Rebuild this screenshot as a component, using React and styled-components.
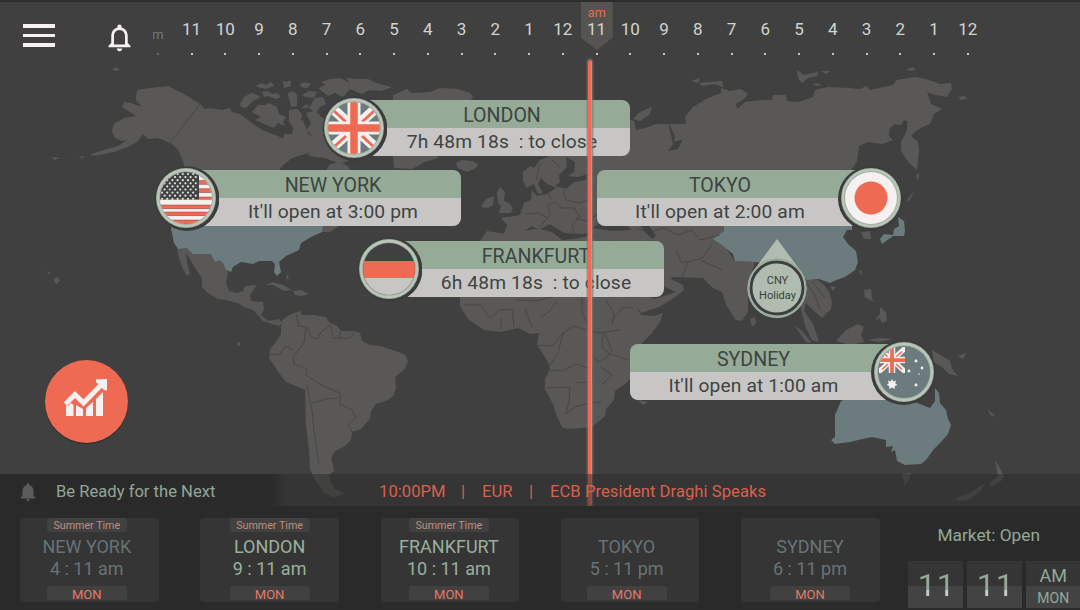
import React from "react";
import styled, { createGlobalStyle } from "styled-components";

const c = {
  bg: "#404040",
  dark: "#2a2a2a",
  land: "#595856",
  blue: "#6b7b7e",
  green: "#95ab97",
  grey: "#c8c6c5",
  orange: "#ee6a52",
  white: "#f6f0f0",
  ink: "#3d4442",
};

const GlobalStyle = createGlobalStyle`
  * { box-sizing: border-box; }
  body { margin: 0; background: ${c.bg}; font-family: Roboto, "Liberation Sans", sans-serif; }
`;

const Screen = styled.div`
  position: relative;
  display: flex;
  flex-direction: column;
  width: 1080px;
  height: 610px;
  overflow: hidden;
  background: ${c.bg};
  border-top: 2px solid #2e2e2e;
`;

const MapLayer = styled.svg`
  position: absolute;
  left: 0;
  top: -2px;
`;

const Header = styled.header`
  position: relative;
  display: flex;
  height: 64px;
  padding-left: 23px;
`;

const MenuButton = styled.div`
  display: flex;
  flex-direction: column;
  gap: 6px;
  width: 32px;
  margin-top: 22px;
`;

const MenuBar = styled.span`
  height: 3.6px;
  background: ${c.white};
`;

const HeaderBell = styled.svg`
  flex: none;
  width: 33px;
  height: 33px;
  margin: 18.5px 0 0 47.5px;
`;

const HourScale = styled.div`
  display: flex;
  margin-left: 5.5px;
`;

const Hour = styled.div`
  position: relative;
  display: flex;
  flex-direction: column;
  align-items: center;
  width: 33.76px;
  padding-top: ${(p) => (p.$small ? 23 : 17)}px;
  color: ${(p) => (p.$small ? "#6b7b7e" : "#d2d4d0")};
  font-size: ${(p) => (p.$small ? 13 : 17)}px;
  line-height: 20px;

  &::after {
    content: "";
    width: 2px;
    height: 2px;
    margin-top: ${(p) => (p.$small ? 8 : 14)}px;
    background: ${(p) => (p.$small ? "#6c6c6c" : "#c4c8c3")};
  }
`;

const HourText = styled.span`
  position: relative;
`;

const NowTag = styled.div`
  position: absolute;
  top: -2px;
  left: 1px;
  width: 32px;
  height: 50px;
  padding-top: 3px;
  background: #555451;
  clip-path: polygon(0 0, 100% 0, 100% 75%, 50% 100%, 0 75%);
  color: ${c.orange};
  font-size: 12.5px;
  line-height: 20px;
  text-align: center;
`;

const Stage = styled.main`
  position: relative;
  height: 408px;
`;

const Market = styled.div`
  position: absolute;
  left: ${(p) => p.$x}px;
  top: ${(p) => p.$y - 66 - 33}px;
  display: flex;
  align-items: center;
  flex-direction: ${(p) => (p.$flip ? "row-reverse" : "row")};
  width: ${(p) => p.$w || 308}px;
  height: 66px;
`;

const MarketFlag = styled.svg`
  position: relative;
  flex: none;
  width: 66px;
  height: 66px;
`;

const MarketBody = styled.div`
  flex: 1;
  height: 56px;
  margin: ${(p) => (p.$flip ? "0 -33px 0 0" : "0 0 0 -33px")};
  padding: ${(p) => (p.$flip ? "0 27px 0 0" : "0 0 0 20px")};
  border-radius: ${(p) => (p.$flip ? "8px 0 0 8px" : "0 8px 8px 0")};
  background: linear-gradient(${c.green} 28px, ${c.grey} 28px);
  color: ${c.ink};
  text-align: center;
`;

const MarketName = styled.div`
  height: 28px;
  font-size: 19.6px;
  line-height: 32px;
`;

const MarketStatus = styled.div`
  height: 28px;
  font-size: 19.2px;
  line-height: 27px;
  letter-spacing: 0.15px;
  white-space: pre;
`;

const TimeLine = styled.div`
  position: absolute;
  left: 588px;
  top: -6px;
  width: 4px;
  height: 446px;
  border-radius: 2px;
  background: linear-gradient(90deg, ${c.orange} 70%, #cf9084 70%);
  box-shadow: 0 0 0 1.5px rgba(112, 120, 124, 0.6);
`;

const HolidayPin = styled.div`
  position: absolute;
  left: 747px;
  top: 173px;
  width: 60px;
  height: 80px;
  padding: 34px 0 0 1px;
  color: #353f3c;
  font-size: 11px;
  line-height: 15px;
  text-align: center;
`;

const PinShape = styled.svg`
  position: absolute;
  left: 0;
  top: 0;
`;

const PinLabel = styled.div`
  position: relative;
`;

const ChartButton = styled.div`
  position: absolute;
  left: 45px;
  top: 294px;
  display: flex;
  width: 83px;
  height: 83px;
  border-radius: 50%;
  background: ${c.orange};
  box-shadow: 0 1px 1px #2a2a2a;
`;

const Ticker = styled.div`
  position: relative;
  display: flex;
  align-items: center;
  height: 31.5px;
  padding: 4px 0 0 17px;
  background: linear-gradient(90deg, ${c.dark} 270px, rgba(42, 42, 42, 0.5) 286px);
  color: #93a698;
  font-size: 16.6px;
`;

const TickerLabel = styled.div`
  width: 340px;
  padding-left: 17px;
`;

const TickerPart = styled.div`
  width: ${(p) => p.$w}px;
  color: #d9614c;
  letter-spacing: 0.05px;
  white-space: nowrap;
`;

const Footer = styled.footer`
  position: relative;
  display: flex;
  height: 104.5px;
  padding: 12px 0 0 20px;
  background: ${c.dark};
`;

const Clocks = styled.div`
  display: flex;
  gap: 41.7px;
`;

const Clock = styled.div`
  display: flex;
  flex-direction: column;
  align-items: center;
  width: 138.6px;
  height: 84px;
  padding-right: ${(p) => p.$shift}px;
  border-radius: 4px;
  background: #353535;
  color: ${(p) => (p.$open ? "#9ab09e" : "#687376")};
  font-size: 18px;
  line-height: 22px;
`;

const ClockTag = styled.div`
  width: 80px;
  height: 14px;
  border-radius: 3px;
  background: ${(p) => (p.$empty ? "transparent" : "#414141")};
  color: ${(p) => (p.$day ? "#e27a66" : "#c08e80")};
  font-size: ${(p) => (p.$day ? 13 : 10.7)}px;
  line-height: ${(p) => (p.$day ? 17 : 15)}px;
  text-align: center;
`;

const ClockCity = styled.div`
  margin-top: 4px;
`;

const ClockTime = styled.div`
  margin-bottom: 6px;
`;

const Local = styled.div`
  display: flex;
  flex-direction: column;
  margin-left: 28px;
  padding-top: 6px;
  color: #93a898;
`;

const LocalStatus = styled.div`
  width: 162px;
  height: 37px;
  font-size: 17.3px;
  line-height: 23px;
  text-align: center;
`;

const Tiles = styled.div`
  display: flex;
  gap: 4px;
  width: 172px;
`;

const Tile = styled.div`
  flex: none;
  width: 55px;
  height: 47px;
  padding-left: ${(p) => (p.$stack ? 0 : 3)}px;
  background: linear-gradient(#353535 25px, #434343 25px);
  font-size: ${(p) => (p.$stack ? 18 : 32)}px;
  line-height: ${(p) => (p.$stack ? 29 : 48)}px;
  letter-spacing: ${(p) => (p.$stack ? 0 : 1)}px;
  text-align: center;
`;

const TileDigits = styled.span`
  background: linear-gradient(#93a898 62%, #c8ccc8 62%);
  background-clip: text;
  -webkit-background-clip: text;
  color: transparent;
`;

const TileDay = styled.div`
  font-size: 14px;
  line-height: 16px;
`;

const lands = [
  // North America
  "M136 97L137 90 150 88 168 86 184 94 200 104 205 109 210 108 222 110 230 108 232 112 240 114 252 123 262 130 270 133 278 136 283 139 284 134 292 134 295 121 303 120 308 134 314 137 322 142 317 150 305 154 292 158 280 168 280 180 286 190 300 200 312 198 318 180 326 170 330 164 340 162 348 166 360 195 365 210 345 222 330 232 171 232 176 200 184 165 178 150 170 143 163 140 157 138 148 139 143 134 138 141 130 146 117 151 105 154 92 156 91 154 104 150 118 146 127 140 122 141 115 138 112 131 114 124 124 118 136 116 130 112 122 107 124 102 131 103 142 107 136 100Z",
  "M112 69L116 67 120 70 115 71Z M78 157L84 156 83 158Z M52 157L60 158 54 160Z",
  // Canadian Arctic
  "M240 104L244 97 251 93 257 95 261 97 253 101 246 108 241 107Z",
  "M252 112L258 105 265 105 269 103 277 107 279 114 286 117 283 122 285 126 278 123 274 128 262 123 255 120 261 117Z",
  "M256 86L261 83 266 85 271 82 274 86 266 89 258 87Z M262 92L267 91 272 94 277 93 281 97 276 99 268 96 264 97Z M283 81L287 82 290 80 291 86 284 88Z M288 93L293 91 298 96 294 100 288 97Z",
  "M301 108L307 104 309 108 315 98 323 97 326 104 320 107 316 113 309 108Z M302 95L309 91 317 92 314 98 306 97Z M300 84L305 82 311 84 307 88 301 87Z M289 98L297 97 297 106 291 107Z",
  "M318 88L326 85 321 82 330 79 341 78 350 83 346 78 357 79 368 79 376 83 392 87 381 91 369 90 362 94 350 89 343 97 335 93 328 96 323 92Z",
  "M393 95L407 89 411 93 430 92 440 88 458 89 470 93 473 97 455 120 437 155 438 158 425 162 412 169 394 168 392 145Z",
  "M306 113L313 111 318 113 322 118 330 120 340 150 350 160 340 164 325 158 314 157 308 155 311 149 319 147 315 138 306 130 311 124Z M289 110L297 109 302 114 301 121 294 128 289 122Z",
  // Mexico and Central America
  "M177 249L187 247 212 253 222 261 228 272 226 283 229 291 237 293 243 291 245 286 257 285 250 295 251 301 263 302 264 309 261 315 268 321 279 319 282 323 279 326 272 324 263 321 253 310 244 307 238 303 226 300 218 299 208 293 202 287 202 278 195 268 188 256 186 252 187 263 190 274 187 276 183 269 179 258Z",
  "M265 285L273 282 283 285 292 290 284 291 273 285Z M293 291L301 290 309 294 303 296 295 295Z M286 272L289 278 287 280Z",
  "M53 279L58 277 60 281 56 284Z M47 271L51 273 48 274Z M236 344L240 342 240 346Z",
  // South America
  "M281 326L282 320 288 316 294 313 300 311 302 315 313 315 326 317 329 322 337 326 341 331 354 331 360 333 362 341 370 345 380 346 396 351 405 355 408 361 405 369 395 377 396 388 394 395 388 400 376 404 371 411 370 419 361 429 352 432 351 440 345 446 335 451 331 458 333 465 334 471 329 475 331 483 335 489 345 494 333 497 323 492 314 478 310 469 309 450 306 425 305 390 296 386 286 382 279 373 269 358 270 349 276 342 281 334Z",
  // Europe
  "M523 180L523 172 530 166 534 168 540 160 552 155 570 150 590 130 608 120 622 118 634 121 636 130 645 128 656 124 668 125 671 131 680 141 688 170 700 190 700 240 674 277 664 280 640 270 600 240 588 233 575 235 560 232 545 238 540 230 532 226 520 234 504 234 507 225 501 218 520 215 524 203 531 200 532 190 537 196 549 193 556 188 548 184 545 192 538 194 534 184 526 188Z",
  "M481 207L486 199 494 196 493 205 488 208Z M497 192L500 187 505 192 504 201 509 203 513 208 511 213 499 213 501 206 498 203Z",
  "M456 163L462 160 472 161 478 164 476 168 467 172 458 168Z",
  "M633 119L640 112 652 107 650 114 640 121Z M691 81L700 78 698 83Z M699 83L710 82 722 81 723 87 714 84 702 86Z",
  // Asia
  "M640 160L660 124 686 124 685 117 693 107 708 98 721 93 721 88 730 91 741 89 748 94 744 99 736 104 737 109 745 102 760 100 772 100 773 95 786 95 787 101 799 102 813 97 815 90 828 87 848 88 860 89 866 86 870 90 893 85 897 80 915 77 926 79 940 84 951 83 952 89 947 97 935 95 927 92 931 104 942 109 934 114 930 124 923 127 916 131 911 136 918 142 919 151 917 170 909 163 901 151 901 142 907 130 907 121 897 128 890 127 889 136 893 140 882 144 868 142 859 146 857 161 850 172 842 190 840 226 720 240 735 261 755 262 751 276 748 300 748 312 742 321 736 320 726 305 722 292 713 288 703 278 674 277 655 250Z",
  "M797 70L804 75 818 72 817 76 808 78 802 83 798 78Z M821 71L831 71 826 74Z M812 85L817 83 822 86Z M907 69L913 67 916 70 909 71Z M958 97L965 96 967 99 961 100Z",
  // Arabia
  "M626 288L634 275 650 272 666 268 671 279 683 285 684 290 674 298 659 307 641 313 633 302Z",
  // Africa
  "M487 231L505 234 535 229 553 230 562 240 590 236 618 242 628 260 632 298 641 315 654 316 663 313 660 322 652 333 640 345 632 352 630 365 632 377 625 384 615 391 614 400 606 409 605 416 592 427 570 429 563 428 557 417 553 404 545 389 545 379 550 369 548 362 539 348 537 344 539 333 530 334 518 328 501 332 484 330 468 319 460 306 460 290 466 265 474 250Z",
  "M638 400L648 402 643 405Z M750 319L755 317 756 323 752 327Z",
  // South-East Asia
  "M798 276L806 279 818 280 824 285 829 292 832 302 831 309 822 318 813 310 806 303 804 311 813 324 819 342 812 340 806 328 801 310Z M794 325L802 331 812 343 806 342Z M836 341L846 330 858 324 864 327 861 335 864 342 850 345Z",
  "M864 290L871 289 872 299 876 302 870 300 865 297Z M880 307L886 312 887 321 882 323 880 318 875 320 880 314Z M868 340L880 338 893 339 880 342Z M830 286L836 287 833 291Z M859 270L862 271 861 276Z",
  "M861 232L870 231 871 239 864 239Z M916 176L919 172 918 181Z M906 201L914 191 910 200Z M903 489L911 473 905 480Z",
  "M932 350L942 356 950 361 952 369 958 376 949 374 943 368 934 362Z M958 356L966 353 963 359Z M998 476L995 460 1001 470 1004 477 1000 482 991 487 989 484Z M985 483L980 492 968 500 957 501 956 498 968 494Z M902 474L911 473 908 482 903 480Z M988 409L996 417 990 415Z",
];

const highlighted = [
  "M171 228L174 243 178 249 187 248 193 254 211 254 215 262 219 260 223 263 226 270 231 272 233 267 241 262 253 264 259 261 272 261 275 264 274 272 277 276 281 272 279 262 286 256 299 250 301 243 311 237 322 232 323 225 171 225Z",
  "M713 239L724 231 724 224 852 224 852 230 847 230 843 237 848 244 856 251 858 262 855 270 845 277 834 281 830 283 819 279 807 280 800 275 780 265 755 262 735 261 733 254 723 246Z",
  "M880 239L884 234 893 235 894 229 899 226 898 217 904 221 905 231 904 236 893 236 886 241 882 244Z",
  "M841 401L870 388 890 380 915 402 930 408 935 401 935 388 939 393 940 403 946 410 948 419 951 425 948 434 941 442 934 449 926 460 921 464 905 465 897 461 895 450 891 452 893 446 886 447 886 440 872 437 858 440 850 442 835 444 831 440 835 437 835 415Z",
];

const borders = [
  "M200 104L170 143 178 150 184 164",
  "M296 314L299 326 306 327 304 343 293 357 294 364 307 369 306 375 321 385 340 393 340 404 352 410 356 418 348 424 352 432",
  "M307 327L311 337 317 339 322 331 331 325 333 338 349 338M341 331L339 338M354 332L351 338",
  "M270 354L279 355 286 346 293 350M307 385L310 402 312 410 314 430 319 465M313 403L326 399 338 398",
  "M465 305L480 305 490 318 500 310 512 309 514 327M501 318V330M515 300L535 301 552 297M525 309L532 327M540 318L550 311 556 302M536 345L553 346 562 334 574 326 590 331 600 333 619 330",
  "M563 333L558 353 549 366M582 298V312L590 330M603 333L602 347 610 354 599 362 590 354 591 342M548 370L563 371 576 364 593 370 592 382 576 383M546 388L570 387 569 401 566 414 575 407 586 404 601 402M610 354L629 360M601 367L612 375 602 384M612 321L622 308 633 307M605 333L612 352",
  "M540 227L550 215 548 205 555 202 562 208 574 208 580 217 572 225 574 234M525 214L539 213 548 218M545 190L552 200M563 190L566 200 580 203 590 198M576 218L586 221 598 214 598 204 612 200M596 224L612 228",
  "M636 228L650 232 664 228 678 235 692 230 700 240 720 235M682 278L688 262 702 258 712 244M700 260L722 270M762 268L775 275",
  "M676 250L681 262 688 262M540 163L536 180M552 160L560 167M606 300L614 313 612 325M650 240L644 250 650 260",
  "M805 282L815 295 820 310M812 281L825 298",
];

const WorldMap = () => (
  <MapLayer width="1080" height="508" viewBox="0 0 1080 508">
    {lands.map((d) => <path key={d} d={d} fill={c.land} />)}
    <path
      fill={c.bg}
      d="M668 122L675 136 674 142 683 139 678 149 668 151 673 144ZM555 186L560 182 559 175 567 167 566 157 575 162 574 172 568 176 578 177 588 174 586 180 574 182 566 189ZM538 184L541 178 551 188 544 195ZM625 260L630 275 640 293 655 299 676 292 662 286 650 279 644 270 636 262ZM592 228L607 220 625 224 632 230 612 231ZM638 222L648 224 656 236 652 239 645 232ZM174 229L190 227 202 229 189 233ZM284 227L302 226 291 230ZM889 131L894 124 901 125 904 120 908 122 903 134 893 140ZM540 229L552 232 562 240 580 238 580 234 564 233 556 228 550 224Z"
    />
    {highlighted.map((d) => <path key={d} d={d} fill={c.blue} />)}
    {borders.map((d) => <path key={d} d={d} fill="none" stroke="#434342" strokeWidth="0.8" strokeLinejoin="round" />)}
  </MapLayer>
);

const Union = () => (
  <>
    <rect x="-30" y="-30" width="60" height="60" fill={c.blue} />
    <path d="M-30-27L30 27M-30 27L30-27" stroke={c.white} strokeWidth="10" />
    <path d="M-20-17L-8-6M20 19L8 8M-20 19L-8 8M20-17L8-6" stroke={c.orange} strokeWidth="2.8" />
    <path d="M0-30V30M-30 0H30" stroke={c.white} strokeWidth="13" />
    <path d="M0-30V30M-30 0H30" stroke={c.orange} strokeWidth="7.5" />
  </>
);

const stars = [];
for (let row = 0; row < 9; row += 1) {
  for (let col = 0; col < 8; col += 1) {
    stars.push([-24 + col * 5.2 + (row % 2 ? 2.6 : 0), -24 + row * 3.1]);
  }
}

const flagArt = {
  uk: <Union />,
  us: (
    <>
      <rect x="-30" y="-30" width="60" height="60" fill={c.white} />
      {[-17.5, -9.2, -1, 7, 14, 22].map((y) => (
        <rect key={y} x="-30" y={y} width="60" height="3.8" fill={c.orange} stroke="#765048" strokeWidth="0.5" />
      ))}
      <rect x="-30" y="-30" width="43" height="31.5" fill="#404243" />
      {stars.filter((s) => s[0] < 12).map((s) => <circle key={s.join()} cx={s[0]} cy={s[1]} r="1.1" fill="#dfe3df" />)}
      <rect x="-30" y="1.8" width="60" height="4" fill={c.white} />
    </>
  ),
  de: (
    <>
      <rect x="-30" y="-30" width="60" height="60" fill={c.bg} />
      <rect x="-30" y="-8" width="60" height="17" fill={c.orange} />
      <rect x="-30" y="9" width="60" height="24" fill={c.grey} />
    </>
  ),
  jp: (
    <>
      <rect x="-30" y="-30" width="60" height="60" fill={c.white} />
      <circle r="16.5" fill={c.orange} />
    </>
  ),
  au: (
    <>
      <rect x="-30" y="-30" width="60" height="60" fill={c.blue} />
      <svg x="-25" y="-25" width="26" height="26" viewBox="-26 -26 52 52"><Union /></svg>
      <path d="M-12 7L-10.700 9.500-8 8.600-8.800 11.200-6.500 13-9.200 14-9.300 17-12 15.400-14.700 17-14.800 14-17.300 13-15.200 11.200-16 8.600-13.300 9.500Z" fill={c.white} />
      {[[12, -11], [18, -4], [5, -1], [12, 13]].map((s) => <circle key={s.join()} cx={s[0]} cy={s[1]} r="1.4" fill={c.white} />)}
      <circle cx="15" cy="2" r="0.8" fill={c.white} />
    </>
  ),
};

const Flag = ({ code, flip }) => (
  <MarketFlag viewBox="-33 -33 66 66">
    <defs>
      <clipPath id={`flag-${code}`}><circle r="26" /></clipPath>
    </defs>
    <circle cx={flip ? -0.6 : 1} cy="0.6" r="32.400" fill="#3c3c3c" />
    <circle r="30" fill={c.green} />
    <circle r="28" fill="none" stroke="#bcc4bb" strokeWidth="2.4" />
    <g clipPath={`url(#flag-${code})`}>{flagArt[code]}</g>
  </MarketFlag>
);

const markets = [
  { code: "uk", x: 321, y: 127.5, w: 309, name: "LONDON", status: "7h 48m 18s  : to close" },
  { code: "us", x: 152.5, y: 198, name: "NEW YORK", status: "It'll open at 3:00 pm" },
  { code: "de", x: 355.5, y: 268.5, name: "FRANKFURT", status: "6h 48m 18s  : to close" },
  { code: "jp", x: 596.5, y: 198, w: 307, name: "TOKYO", status: "It'll open at 2:00 am", flip: true },
  { code: "au", x: 630, y: 372.4, w: 307, name: "SYDNEY", status: "It'll open at 1:00 am", flip: true },
];

const hours = ["11", "10", "9", "8", "7", "6", "5", "4", "3", "2", "1", "12"];

const clocks = [
  { city: "NEW YORK", time: "4 : 11 am", summer: true, shift: 5 },
  { city: "LONDON", time: "9 : 11 am", summer: true, open: true, shift: 0 },
  { city: "FRANKFURT", time: "10 : 11 am", summer: true, open: true, shift: 2 },
  { city: "TOKYO", time: "5 : 11 pm", shift: 7 },
  { city: "SYDNEY", time: "6 : 11 pm", shift: 1 },
];

export default function App() {
  return (
    <>
      <GlobalStyle />
      <Screen>
        <WorldMap />
        <Header>
          <MenuButton>
            <MenuBar />
            <MenuBar />
            <MenuBar />
          </MenuButton>
          <HeaderBell viewBox="0 0 24 24" fill={c.white}>
            <path d="M12 22c1.1 0 2-.9 2-2h-4c0 1.100.9 2 2 2zm6-6v-5c0-3.070-1.630-5.640-4.500-6.320V4c0-.83-.67-1.500-1.500-1.500s-1.500.67-1.500 1.500v.68C7.640 5.360 6 7.920 6 11v5l-2 2v1h16v-1l-2-2zm-2 1H8v-6c0-2.480 1.510-4.500 4-4.500s4 2.020 4 4.500v6z" />
          </HeaderBell>
          <HourScale>
            <Hour $small>m</Hour>
            {[...hours, ...hours].map((h, i) => (
              <Hour key={i}>
                {i === 12 && <NowTag>am</NowTag>}
                <HourText>{h}</HourText>
              </Hour>
            ))}
          </HourScale>
        </Header>
        <Stage>
          {markets.map((m) => (
            <Market key={m.code} $x={m.x} $y={m.y} $w={m.w} $flip={m.flip}>
              <Flag code={m.code} flip={m.flip} />
              <MarketBody $flip={m.flip}>
                <MarketName>{m.name}</MarketName>
                <MarketStatus>{m.status}</MarketStatus>
              </MarketBody>
            </Market>
          ))}
          <HolidayPin>
            <PinShape width="60" height="80" viewBox="0 0 60 80">
              <path d="M30 0L53 31A29.500 29.500 0 1 1 7 31Z" fill="#b1bcb1" />
              <circle cx="30" cy="49" r="28.800" fill="none" stroke={c.green} strokeWidth="1.400" />
              <circle cx="30" cy="49" r="26" fill="none" stroke="#3d403e" strokeWidth="3" />
            </PinShape>
            <PinLabel>CNY</PinLabel>
            <PinLabel>Holiday</PinLabel>
          </HolidayPin>
          <ChartButton>
            <svg width="83" height="83" viewBox="0 9 83 83" fill={c.white}>
              <path d="M21 60V55L25 51 28.500 54V65H21ZM31 54L38 58V65H31ZM41 57L48 51V65H41ZM51 48L58 41V65H51Z" />
              <path d="M20.500 52L30 42 39 51 56 33" fill="none" stroke={c.orange} strokeWidth="8" />
              <path d="M20.500 53L30 43.500 38.500 52 57 33" fill="none" stroke={c.white} strokeWidth="5" />
              <path d="M51 28.500L62 28V39.500L59 39 51 31Z" />
            </svg>
          </ChartButton>
          <TimeLine />
        </Stage>
        <Ticker>
          <svg width="22" height="22" viewBox="0 0 24 24" fill="#5c5c5b">
            <path d="M12 22c1.100 0 2-.9 2-2h-4c0 1.100.89 2 2 2zm6-6v-5c0-3.070-1.640-5.640-4.500-6.320V4c0-.83-.67-1.500-1.500-1.500s-1.500.67-1.500 1.500v.68C7.630 5.360 6 7.920 6 11v5l-2 2v1h16v-1l-2-2z" />
          </svg>
          <TickerLabel>Be Ready for the Next</TickerLabel>
          <TickerPart $w={82}>10:00PM</TickerPart>
          <TickerPart $w={21}>|</TickerPart>
          <TickerPart $w={47}>EUR</TickerPart>
          <TickerPart $w={21}>|</TickerPart>
          <TickerPart $w={230}>ECB President Draghi Speaks</TickerPart>
        </Ticker>
        <Footer>
          <Clocks>
            {clocks.map((k) => (
              <Clock key={k.city} $open={k.open} $shift={k.shift}>
                <ClockTag $empty={!k.summer}>{k.summer ? "Summer Time" : ""}</ClockTag>
                <ClockCity>{k.city}</ClockCity>
                <ClockTime>{k.time}</ClockTime>
                <ClockTag $day>MON</ClockTag>
              </Clock>
            ))}
          </Clocks>
          <Local>
            <LocalStatus>Market: Open</LocalStatus>
            <Tiles>
              <Tile><TileDigits>11</TileDigits></Tile>
              <Tile><TileDigits>11</TileDigits></Tile>
              <Tile $stack>
                AM
                <TileDay>MON</TileDay>
              </Tile>
            </Tiles>
          </Local>
        </Footer>
      </Screen>
    </>
  );
}
